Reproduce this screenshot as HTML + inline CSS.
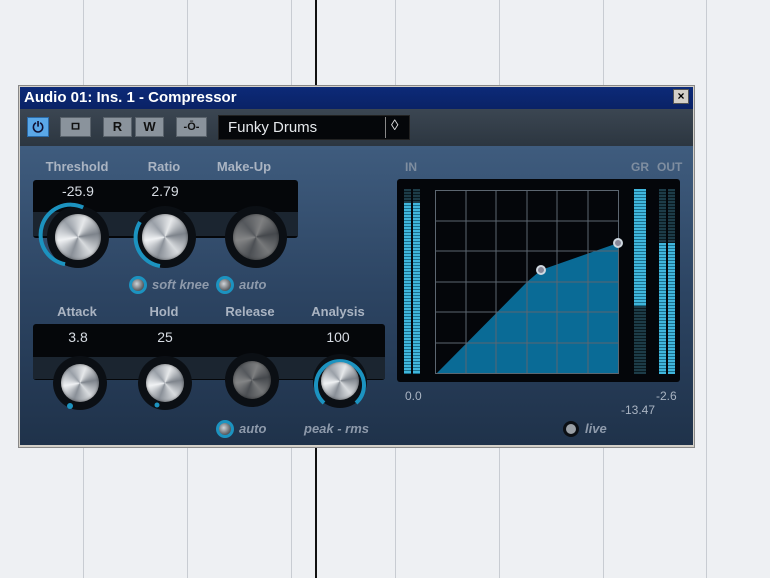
<!DOCTYPE html>
<html><head><meta charset="utf-8"><style>
*{margin:0;padding:0;box-sizing:border-box}
body{width:770px;height:578px;background:#eef0f3;position:relative;overflow:hidden;font-family:"Liberation Sans",sans-serif}
.a{position:absolute}
.vl{position:absolute;top:0;width:1px;height:578px;background:#c8ccd2}
.lbl{position:absolute;color:#aab4c2;font-weight:bold;font-size:13px;text-align:center;width:100px}
.val{position:absolute;color:#d8dde4;font-size:14px;text-align:center;width:60px}
.metal{position:absolute;border-radius:50%;background:conic-gradient(from 200deg,#8a9098,#f0f2f4,#9aa0a8,#e6e8ea,#7d838b,#d8dbde,#8a9098);box-shadow:inset 0 0 3px rgba(0,0,0,.5)}
.dim{filter:brightness(.55)}
.btn{position:absolute;border-radius:50%;width:18px;height:18px;border:3px solid #1c93c0;background:radial-gradient(circle at 40% 40%,#d0d4d8,#55595e 70%)}
.it{position:absolute;color:#8e9aab;font-style:italic;font-weight:bold;font-size:13px}
.tb{position:absolute;top:117px;height:20px;background:#8a939c;border:1px solid #5a636c;font-weight:bold;font-size:13px;text-align:center;line-height:18px;color:#111}
.seg{position:absolute;background:repeating-linear-gradient(#40b6dc 0 2px,#1b6f8c 2px 3px)}
.segd{position:absolute;background:repeating-linear-gradient(#1d3c48 0 2px,#0a1a20 2px 3px)}
.sm{position:absolute;color:#aab4c2;font-size:12px}
</style></head><body>
<div class="vl" style="left:83px"></div><div class="vl" style="left:187px"></div><div class="vl" style="left:291px"></div><div class="vl" style="left:395px"></div><div class="vl" style="left:499px"></div><div class="vl" style="left:603px"></div><div class="vl" style="left:706px"></div>
<div class="a" style="left:315px;top:0;width:2px;height:578px;background:#111"></div>

<div class="a" style="left:18px;top:85px;width:677px;height:363px;background:#d4d0c8;border:1px solid #888"></div>
<div class="a" style="left:20px;top:87px;width:673px;height:22px;background:linear-gradient(#0c2a78,#0a2266)"></div>
<div class="a" style="left:24px;top:89px;color:#fff;font-weight:bold;font-size:15px">Audio 01: Ins. 1 - Compressor</div>
<div class="a" style="left:673px;top:89px;width:16px;height:15px;background:#d4d0c8;border:1px solid #555;font-size:12px;line-height:13px;text-align:center;font-weight:bold">×</div>

<div class="a" style="left:20px;top:109px;width:673px;height:37px;background:linear-gradient(#3b4652,#2c3640)"></div>
<div class="a" style="left:27px;top:117px;width:22px;height:20px;background:#5aa8e8;border:1px solid #2a6aa8;color:#113;font-size:14px;text-align:center;line-height:18px;font-weight:bold">⏻</div>
<div class="tb" style="left:60px;width:31px">ㅁ</div>
<div class="tb" style="left:103px;width:29px">R</div>
<div class="tb" style="left:135px;width:29px">W</div>
<div class="tb" style="left:176px;width:31px;font-size:11px">-Ō-</div>
<div class="a" style="left:218px;top:115px;width:192px;height:25px;background:#05070a;border:1px solid #222"></div>
<div class="a" style="left:228px;top:119px;color:#e6e9ec;font-size:15px">Funky Drums</div>
<div class="a" style="left:385px;top:117px;width:1px;height:21px;background:#888"></div>
<div class="a" style="left:391px;top:117px;color:#ddd;font-size:15px">◊</div>

<div class="a" style="left:20px;top:146px;width:673px;height:299px;background:linear-gradient(#3f5c7e,#2c4462 50%,#1f324a)"></div>

<div class="lbl" style="left:27px;top:159px">Threshold</div>
<div class="lbl" style="left:114px;top:159px">Ratio</div>
<div class="lbl" style="left:194px;top:159px">Make-Up</div>
<div class="a" style="left:33px;top:180px;width:265px;height:58px;background:#05070a;border-radius:3px"></div>
<div class="a" style="left:33px;top:212px;width:265px;height:24px;background:#1b2530"></div>
<div class="val" style="left:48px;top:183px">-25.9</div>
<div class="val" style="left:135px;top:183px">2.79</div>

<div class="lbl" style="left:27px;top:304px">Attack</div>
<div class="lbl" style="left:114px;top:304px">Hold</div>
<div class="lbl" style="left:200px;top:304px">Release</div>
<div class="lbl" style="left:288px;top:304px">Analysis</div>
<div class="a" style="left:33px;top:324px;width:352px;height:56px;background:#05070a;border-radius:3px"></div>
<div class="a" style="left:33px;top:357px;width:352px;height:22px;background:#1b2530"></div>
<div class="val" style="left:48px;top:329px">3.8</div>
<div class="val" style="left:135px;top:329px">25</div>
<div class="val" style="left:308px;top:329px">100</div>

<svg class="a" style="left:0;top:0" width="770" height="578">
<circle cx="78" cy="237" r="31" fill="#0b0f14"/>
<path d="M78 207 A30 30 0 1 0 70 266" stroke="#1c93c0" stroke-width="4" fill="none" transform="rotate(10 78 237)"/>
<circle cx="165" cy="237" r="31" fill="#0b0f14"/>
<path d="M140 222 A29 29 0 0 0 160 266" stroke="#1c93c0" stroke-width="4" fill="none"/>
<circle cx="256" cy="237" r="31" fill="#0b0f14"/>
<circle cx="80" cy="383" r="27" fill="#0b0f14"/>
<circle cx="165" cy="383" r="27" fill="#0b0f14"/>
<circle cx="252" cy="380" r="27" fill="#0b0f14"/>
<circle cx="340" cy="381" r="27" fill="#0b0f14"/>
<path d="M324 403 A24 24 0 1 1 356 403" stroke="#1c93c0" stroke-width="4" fill="none"/>
<circle cx="70" cy="406" r="3" fill="#1c93c0"/>
<circle cx="157" cy="405" r="2.5" fill="#1c93c0"/>
</svg>
<div class="metal" style="left:55px;top:214px;width:46px;height:46px"></div>
<div class="metal" style="left:142px;top:214px;width:46px;height:46px"></div>
<div class="metal dim" style="left:233px;top:214px;width:46px;height:46px"></div>
<div class="metal" style="left:61px;top:364px;width:38px;height:38px"></div>
<div class="metal" style="left:146px;top:364px;width:38px;height:38px"></div>
<div class="metal dim" style="left:233px;top:361px;width:38px;height:38px"></div>
<div class="metal" style="left:321px;top:362px;width:38px;height:38px"></div>

<div class="btn" style="left:129px;top:276px"></div><div class="it" style="left:152px;top:277px">soft knee</div>
<div class="btn" style="left:216px;top:276px"></div><div class="it" style="left:239px;top:277px">auto</div>
<div class="btn" style="left:216px;top:420px"></div><div class="it" style="left:239px;top:421px">auto</div>
<div class="it" style="left:304px;top:421px">peak - rms</div>

<div class="sm" style="left:405px;top:160px;font-weight:bold;color:#7f8ea0">IN</div>
<div class="sm" style="left:631px;top:160px;font-weight:bold;color:#7f8ea0">GR</div>
<div class="sm" style="left:657px;top:160px;font-weight:bold;color:#7f8ea0">OUT</div>
<div class="a" style="left:397px;top:179px;width:283px;height:203px;background:#04060a;border-radius:3px"></div>
<div class="segd" style="left:404px;top:189px;width:7px;height:185px"></div><div class="segd" style="left:413px;top:189px;width:7px;height:185px"></div>
<div class="seg" style="left:404px;top:203px;width:7px;height:171px"></div><div class="seg" style="left:413px;top:203px;width:7px;height:171px"></div>
<div class="segd" style="left:634px;top:189px;width:12px;height:185px"></div>
<div class="seg" style="left:634px;top:189px;width:12px;height:117px"></div>
<div class="segd" style="left:659px;top:189px;width:7px;height:185px"></div><div class="segd" style="left:668px;top:189px;width:7px;height:185px"></div>
<div class="seg" style="left:659px;top:243px;width:7px;height:131px"></div><div class="seg" style="left:668px;top:243px;width:7px;height:131px"></div>
<svg class="a" style="left:0;top:0" width="770" height="578">
<polygon points="437,373 527,282 541,270 618,243 618,373" fill="#0a6b96"/>
<g stroke="#5c6670" stroke-width="1" fill="none">
<rect x="435.5" y="190.5" width="183" height="183"/>
<path d="M466 190V373M496 190V373M527 190V373M557 190V373M588 190V373M435 221H618M435 251H618M435 282H618M435 312H618M435 343H618"/>
</g>
<circle cx="541" cy="270" r="4" fill="#889" stroke="#cfd8e0" stroke-width="2"/>
<circle cx="618" cy="243" r="4" fill="#889" stroke="#cfd8e0" stroke-width="2"/>
<circle cx="571" cy="429" r="8" fill="#0b0f14"/>
<circle cx="571" cy="429" r="5" fill="#9aa0a6"/>
</svg>
<div class="sm" style="left:405px;top:389px">0.0</div>
<div class="sm" style="left:656px;top:389px">-2.6</div>
<div class="sm" style="left:621px;top:403px">-13.47</div>
<div class="it" style="left:585px;top:421px">live</div>
</body></html>
